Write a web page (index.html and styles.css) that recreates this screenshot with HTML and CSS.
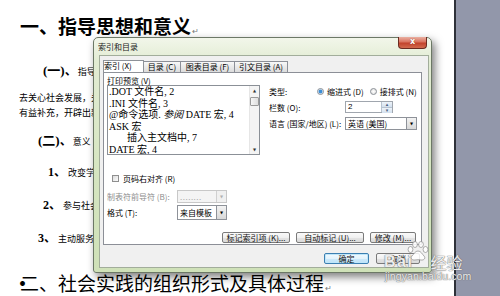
FILE: index.html
```html
<!DOCTYPE html>
<html lang="zh-CN">
<head>
<meta charset="utf-8">
<title>索引和目录</title>
<link rel="stylesheet" href="styles.css">
</head>
<body>
<div class="screen">
  <div class="doc">
    <div class="h1">一、指导思想和意义<span class="ret">↵</span></div>
    <div class="sub sub1"><b class="paren">(一)</b><b class="dun">、</b>指导思想和基本原则</div>
    <div class="para p1">去关心社会发展，关注社会热点问题，使学生在实践中成长</div>
    <div class="para">有益补充，开辟出新的育人途径。</div>
    <div class="sub sub2"><b class="paren">(二)</b><b class="dun">、</b>意义</div>
    <div class="item i1"><b class="num">1、</b>改变学生的学习方式</div>
    <div class="item i2"><b class="num">2、</b>参与社会实践活动</div>
    <div class="item i3"><b class="num">3、</b>主动服务社会</div>
    <div class="h2"><span class="dot">·</span>二、社会实践的组织形式及具体过程<span class="ret">↵</span></div>

    <div class="dlg">
      <div class="tbar">
        <span class="title">索引和目录</span>
        <span class="close">x</span>
      </div>
      <div class="client">
        <div class="tabs">
          <div class="tab sel w1">索引 (X)</div>
          <div class="tab w2">目录 (C)</div>
          <div class="tab w3">图表目录 (F)</div>
          <div class="tab w4">引文目录 (A)</div>
        </div>
        <div class="panel">
          <div class="upper">
            <div class="lcol">
              <div class="plabel">打印预览 (V)</div>
              <div class="list">
                <div class="items">
                  <div>.DOT 文件名, 2</div>
                  <div>.INI 文件名, 3</div>
                  <div>@命令选项. <i>参阅</i> DATE 宏, 4</div>
                  <div>ASK 宏</div>
                  <div class="ind">插入主文档中, 7</div>
                  <div>DATE 宏, 4</div>
                </div>
                <div class="sbar">
                  <span class="sarr">▲</span>
                  <span class="thumb"></span>
                  <span class="sfill"></span>
                  <span class="sarr">▼</span>
                </div>
              </div>
            </div>
            <div class="rcol">
              <div class="row">
                <span class="lbl l46">类型:</span>
                <span class="radio on"></span><span class="rtxt">缩进式 (D)</span>
                <span class="radio r2"></span><span class="rtxt">接排式 (N)</span>
              </div>
              <div class="row">
                <span class="lbl l76">栏数 (O):</span>
                <span class="spin"><span class="sval">2</span><span class="sbtns"><span>▴</span><span>▾</span></span></span>
              </div>
              <div class="row">
                <span class="lbl l76">语言 (国家/地区) (L):</span>
                <span class="sel w72"><span class="sv">英语 (美国)</span><span class="dd">▼</span></span>
              </div>
            </div>
          </div>
          <div class="checkrow"><span class="cbox"></span><span class="ctxt">页码右对齐 (R)</span></div>
          <div class="frow leader">
            <span class="lbl l70 dis">制表符前导符 (B):</span>
            <span class="sel w50 disabled"><span class="sv">........</span><span class="dd">▼</span></span>
          </div>
          <div class="frow fmt">
            <span class="lbl l70">格式 (T):</span>
            <span class="sel w50 tall"><span class="sv">来自模板</span><span class="dd">▼</span></span>
          </div>
          <div class="btnrow">
            <span class="btn b68">标记索引项 (K)...</span>
            <span class="btn b68">自动标记 (U)...</span>
            <span class="btn b46">修改 (M)...</span>
          </div>
        </div>
        <div class="okrow">
          <span class="btn def b45">确定</span>
          <span class="btn b44">取消</span>
        </div>
      </div>
    </div>
  </div>
  <div class="edge"></div>
  <div class="side"></div>

  <div class="wm">
    <div class="wm-top">
      <span class="bai">Bai</span>
      <svg class="paw" width="22" height="20" viewBox="0 0 22 20">
        <ellipse cx="3.5" cy="8.5" rx="2.4" ry="3"/>
        <ellipse cx="8" cy="3.5" rx="2.4" ry="3"/>
        <ellipse cx="14" cy="3.5" rx="2.4" ry="3"/>
        <ellipse cx="18.5" cy="8.5" rx="2.4" ry="3"/>
        <path d="M11 10 C8 10 7 13 5 15 C3 17 5 19.5 8 19 C10 18.6 12 18.6 14 19 C17 19.5 19 17 17 15 C15 13 14 10 11 10 Z"/>
      </svg>
      <span class="jy">经验</span>
    </div>
    <div class="wm-url">jingyan.baidu.com</div>
  </div>
</div>
</body>
</html>
```
FILE: styles.css
```css
* { box-sizing: border-box; margin: 0; padding: 0; }
html, body { width: 500px; height: 296px; overflow: hidden; background: #fff; }
body { font-family: "Noto Sans CJK SC", sans-serif; color: #000; }

.screen { position: relative; display: flex; width: 500px; height: 296px; }
.doc { position: relative; width: 454px; height: 296px; background: #fff; display: flex; flex-direction: column; }
.edge { width: 2px; background: #2e3139; }
.side { flex: 1; background: #9297aa; }

/* document */
.h1 { flex: none; margin-top: 16px; padding-left: 20px; font-size: 19px; height: 20px; line-height: 20px; font-weight: 700; white-space: nowrap; }
.h2 { flex: none; margin-top: 27px; padding-left: 13px; font-size: 19px; height: 20px; line-height: 20px; font-weight: 400; white-space: nowrap; }
.dot { display: inline-block; width: 7px; font-weight: 700; }
.ret { font-size: 8px; line-height: 8px; color: #777; font-weight: 400; margin-left: 1px; }
.sub { flex: none; font-size: 9px; height: 14px; line-height: 14px; white-space: nowrap; }
.sub1 { margin-top: 29px; padding-left: 43px; }
.sub2 { margin-top: 15px; padding-left: 38px; }
.paren { font-family: "Liberation Serif", "Noto Sans CJK SC", serif; font-size: 13px; line-height: 10px; font-weight: 700; }
.dun { font-size: 12px; line-height: 10px; font-weight: 700; margin-right: 1px; }
.para { flex: none; font-size: 9px; height: 15px; line-height: 15px; padding-left: 19px; white-space: nowrap; }
.p1 { margin-top: 11px; }
.item { flex: none; font-size: 9px; height: 14px; line-height: 14px; white-space: nowrap; }
.num { font-family: "Liberation Serif", "Noto Sans CJK SC", serif; font-size: 12px; line-height: 10px; font-weight: 700; margin-right: 2px; }
.i1 { margin-top: 17px; padding-left: 48px; }
.i2 { margin-top: 19px; padding-left: 43px; }
.i3 { margin-top: 19px; padding-left: 38px; }

/* dialog window */
.dlg {
  position: absolute; left: 93px; top: 37px; width: 339px; height: 236px;
  border: 1px solid #6c7866; border-radius: 5px 5px 3px 3px;
  background: linear-gradient(180deg, #f2f6ea 0%, #e2ecd3 10%, #d5e5c0 60%, #cfe1b8 100%);
  box-shadow: 3px 4px 9px rgba(0,0,0,0.5);
  display: flex; flex-direction: column; font-size: 8px; color: #000;
}
.tbar { height: 17px; display: flex; justify-content: space-between; align-items: flex-start; padding-left: 4px; }
.title { line-height: 18px; font-size: 8px; color: #1a1a1a; }
.close {
  margin-top: -1px; margin-right: 4px; width: 29px; height: 12px;
  border: 1px solid #6a2b20; border-top: none; border-radius: 0 0 4px 4px;
  background: linear-gradient(180deg, #eab0a2 0%, #d9725e 45%, #c2432c 55%, #d26a4e 100%);
  color: #fff; font-family: "DejaVu Sans", sans-serif; font-weight: 700; font-size: 8px; line-height: 10px; text-align: center;
  text-shadow: 0 0 1px #7a2a1a;
}
.client {
  margin: 0 2px 4px 5px; flex: 1; background: #f0f0f0; border: 1px solid #a2ad9b;
  padding: 4px 0 0 3px; display: flex; flex-direction: column;
}

/* tabs */
.tabs { display: flex; align-items: flex-end; height: 12px; position: relative; z-index: 2; }
.tab {
  height: 11px; border: 1px solid #8c8f97; border-bottom: none; margin-right: -1px;
  background: linear-gradient(180deg, #f8f8f8 0%, #e9e9e9 50%, #dcdcdc 100%);
  font-size: 8px; line-height: 10px; text-align: center; white-space: nowrap;
}
.tab.sel { height: 13px; margin-bottom: -1px; background: #fff; position: relative; z-index: 3; }
.w1 { width: 41px; } .w2 { width: 38px; } .w3 { width: 55px; } .w4 { width: 54px; }

.panel { width: 319px; height: 173px; border: 1px solid #8c8f97; background: #fff; display: flex; flex-direction: column; }
.upper { display: flex; height: 82px; flex: none; }
.lcol { margin-left: 3px; width: 153px; }
.plabel { margin-top: 3px; line-height: 9px; height: 9px; white-space: nowrap; }
.list { height: 70px; border: 1px solid #8b9097; display: flex; background: #fff; }
.items { flex: 1; padding-left: 1px; font-family: "Liberation Serif", "Noto Sans CJK SC", serif; font-size: 10px; line-height: 11.4px; white-space: nowrap; overflow: hidden; }
.items > div { height: 11.6px; }
.items i { font-style: italic; }
.ind { padding-left: 18px; }
.sbar { width: 10px; display: flex; flex-direction: column; align-items: center; background: #f4f4f4; border-left: 1px solid #e6e6e6; }
.sarr { font-size: 4px; line-height: 9px; height: 9px; color: #333; font-family: "DejaVu Sans", sans-serif; }
.thumb { width: 9px; height: 9px; border: 1px solid #9a9a9a; border-radius: 1px; background: linear-gradient(90deg, #f6f6f6, #dedede); margin-top: 2px; }
.sfill { flex: 1; }

.rcol { margin-left: 9px; padding-top: 10px; }
.row { display: flex; align-items: center; height: 16px; white-space: nowrap; }
.lbl { display: inline-block; white-space: nowrap; }
.l46 { width: 48px; } .l76 { width: 76px; } .l70 { width: 70px; }
.radio { width: 7px; height: 7px; border-radius: 50%; border: 1px solid #8a8f96; background: radial-gradient(circle, #fff 0%, #dcdcdc 100%); }
.radio.on { background: radial-gradient(circle, #3d8fd6 0 1.6px, #cfe4f7 2.2px, #f4f4f4 100%); }
.radio.r2 { margin-left: 6px; }
.rtxt { margin-left: 3px; }
.spin { display: flex; width: 48px; height: 12px; border: 1px solid #a0a6ae; background: #fff; }
.sval { flex: 1; padding-left: 2px; line-height: 10px; font-family: "Liberation Sans", sans-serif; font-size: 8px; }
.sbtns { width: 11px; display: flex; flex-direction: column; border-left: 1px solid #b7c3d0; }
.sbtns span { flex: 1; font-size: 5px; line-height: 5px; text-align: center; color: #4a6080; background: linear-gradient(#eef4fa, #d3e0ee); font-family: "DejaVu Sans", sans-serif; }
.sbtns span + span { border-top: 1px solid #b7c3d0; }
.sel { display: flex; height: 13px; border: 1px solid #8e9299; background: #fff; }
.w72 { width: 72px; } .w50 { width: 50px; }
.sel.tall { height: 15px; }
.sv { flex: 1; padding-left: 2px; line-height: 11px; white-space: nowrap; overflow: hidden; }
.sel.tall .sv { line-height: 13px; }
.dd { width: 10px; border-left: 1px solid #8e9299; background: linear-gradient(#f3f3f3, #d8d8d8); font-size: 4px; text-align: center; line-height: 11px; font-family: "DejaVu Sans", sans-serif; }
.sel.tall .dd { line-height: 13px; }
.sel.disabled { border-color: #c8c8c8; background: #f4f4f4; }
.sel.disabled .sv { color: #a8a8a8; letter-spacing: 0.5px; }
.sel.disabled .dd { color: #b0b0b0; border-left-color: #d0d0d0; background: #f0f0f0; }
.dis { color: #8d8d8d; }

.checkrow { flex: none; margin-top: 17px; margin-left: 8px; height: 12px; display: flex; align-items: center; }
.cbox { width: 7px; height: 7px; border: 1px solid #8f8f8f; background: linear-gradient(135deg, #dcdcdc, #fbfbfb); }
.ctxt { margin-left: 4px; }
.frow { flex: none; margin-left: 3px; display: flex; align-items: center; white-space: nowrap; }
.leader { margin-top: 6px; height: 13px; }
.fmt { margin-top: 2px; height: 15px; }

.btnrow { flex: none; margin-top: 12px; margin-left: 118px; display: flex; gap: 6px; }
.btn {
  display: flex; align-items: center; justify-content: center; height: 11px;
  border: 1px solid #7a7a7a; border-radius: 2px; white-space: nowrap;
  background: linear-gradient(180deg, #fafafa 0%, #f0f0f0 50%, #e4e4e4 51%, #dadada 100%);
  font-size: 8px; line-height: 9px; color: #111;
}
.b68 { width: 68px; } .b46 { width: 46px; } .b45 { width: 45px; } .b44 { width: 44px; }
.btn.def { border-color: #3c7fb1; box-shadow: inset 0 0 0 1px #bfe6fa; background: linear-gradient(180deg, #f1f9fe 0%, #e3f3fc 50%, #cdeafb 51%, #bfe2f7 100%); }
.okrow { margin-top: 8px; padding-right: 8px; display: flex; justify-content: flex-end; gap: 7px; }

/* watermark */
.wm { position: absolute; left: 384px; top: 241px; color: rgba(255,255,255,0.88); }
.wm-top { display: flex; align-items: flex-end; height: 29px; }
.bai { font-family: "Liberation Sans", sans-serif; font-weight: 700; font-size: 16px; line-height: 14px; letter-spacing: 1.5px; margin-bottom: 1px; text-shadow: 0 0 1px #6c6c6c, 0 0 1px #6c6c6c; }
.paw { align-self: flex-start; margin-left: -6px; fill: rgba(255,255,255,0.85); stroke: #8a8a8a; stroke-width: 0.7; }
.jy { font-size: 16px; line-height: 16px; margin-left: 1px; text-shadow: 0 0 1px #6c6c6c, 0 0 1px #6c6c6c; }
.wm-url { font-family: "Liberation Sans", sans-serif; font-size: 10.5px; line-height: 12px; margin-left: 1px; letter-spacing: 0.1px; text-shadow: 0 0 1px #6c6c6c, 0 0 1px #6c6c6c; }
```
